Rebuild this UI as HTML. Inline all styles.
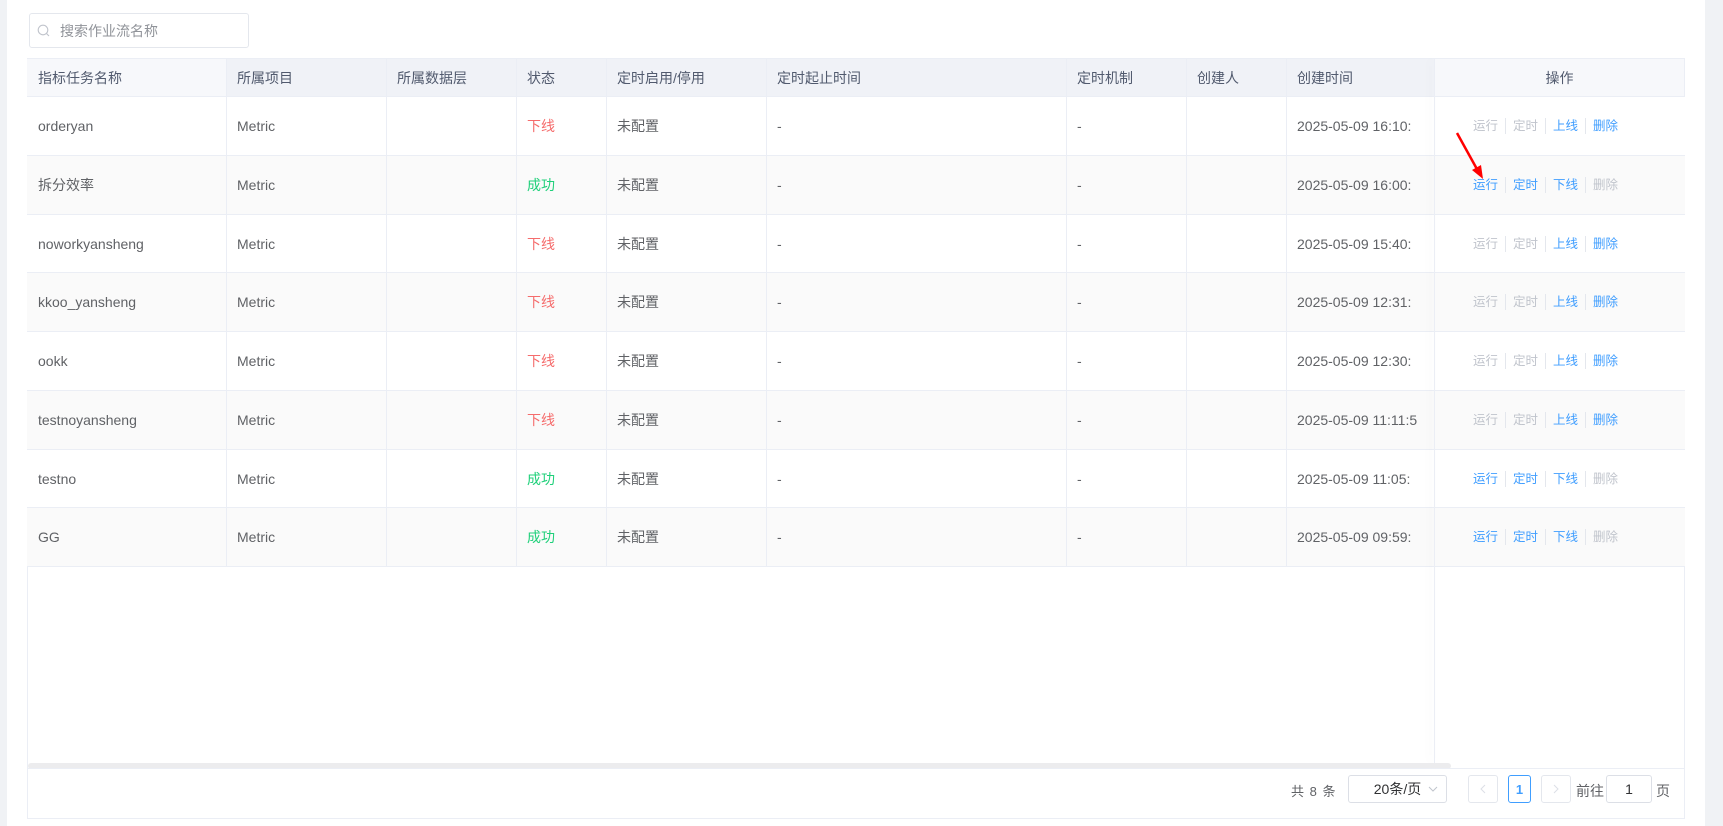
<!DOCTYPE html>
<html><head><meta charset="utf-8"><style>
*{box-sizing:border-box;margin:0;padding:0}
body{width:1723px;height:826px;background:#fff;position:relative;overflow:hidden;font-family:"Liberation Sans","Noto Sans CJK SC",sans-serif;color:#606266;font-size:14px}
.a{position:absolute}
.strip{background:#f0f2f5}
.cell{position:absolute;display:flex;align-items:center;padding-left:10px;white-space:nowrap;overflow:hidden;border-right:1px solid #ebeef5;border-bottom:1px solid #ebeef5}
.hd{color:#515a6e;font-size:14px;background:#f0f2f7}
.red{color:#f56c6c}.grn{color:#1fd07a}
.ops{position:absolute;left:1435px;width:250px;display:flex;align-items:center;justify-content:flex-start;padding-left:31px;font-size:12.5px;border-bottom:1px solid #ebeef5}
.ops span{padding:0 7px;border-left:1px solid #e4e7ed;line-height:16px}
.ops span:first-child{border-left:none}
.b{color:#409eff}.g{color:#c0c4cc}
.box{position:absolute;border:1px solid #dcdfe6;border-radius:3px;background:#fff;display:flex;align-items:center;justify-content:center}
</style></head><body>
<div class="a strip" style="left:0;top:0;width:7px;height:826px"></div>
<div class="a strip" style="left:1705px;top:0;width:18px;height:826px"></div>

<div class="a" style="left:29px;top:13px;width:220px;height:35px;border:1px solid #e4e7ed;border-radius:3px"></div>
<svg class="a" style="left:37px;top:24px" width="13" height="13" viewBox="0 0 13 13"><circle cx="6" cy="6" r="4.8" fill="none" stroke="#c0c4cc" stroke-width="1.1"/><path d="M9.5 9.5L12 12" stroke="#c0c4cc" stroke-width="1.1"/></svg>
<div class="a" style="left:60px;top:21px;font-size:14px;color:#909399">搜索作业流名称</div>

<div class="a" style="left:27px;top:58px;width:1658px;height:761px;border:1px solid #ebeef5"></div>
<div id="t"></div>
<div class="a" style="left:28px;top:763px;width:1423px;height:6px;background:#ececee;border-radius:3px"></div>
<div class="a" style="left:28px;top:768px;width:1656px;height:1px;background:#ebeef5"></div>
<div class="a" style="left:1434px;top:59px;width:1px;height:704px;box-shadow:-4px 0 8px rgba(0,0,0,0.08);background:#ebeef5"></div>
<div class="a" style="left:1435px;top:59px;width:249px;height:38px;background:#f7f8fb;display:flex;align-items:center;justify-content:center;color:#515a6e;border-bottom:1px solid #ebeef5">操作</div>

<div class="a" style="left:1291px;top:781px;font-size:13px;color:#606266;letter-spacing:1px">共 8 条</div>
<div class="box" style="left:1348px;top:775px;width:99px;height:28px;font-size:14px;color:#303133">20条/页<svg style="position:absolute;right:8px;top:10px" width="10" height="7" viewBox="0 0 10 7"><path d="M1 1l4 4 4-4" fill="none" stroke="#c0c4cc"/></svg></div>
<div class="box" style="left:1468px;top:775px;width:30px;height:28px;border-color:#e4e7ed"><svg width="6" height="10"><path d="M5 1L1 5l4 4" fill="none" stroke="#dcdfe6"/></svg></div>
<div class="box" style="left:1508px;top:775px;width:23px;height:28px;border-color:#409eff;color:#409eff;font-weight:bold;font-size:13px">1</div>
<div class="box" style="left:1541px;top:775px;width:30px;height:28px;border-color:#e4e7ed"><svg width="6" height="10"><path d="M1 1l4 4-4 4" fill="none" stroke="#dcdfe6"/></svg></div>
<div class="a" style="left:1576px;top:781px;font-size:14px">前往</div>
<div class="box" style="left:1606px;top:775px;width:46px;height:28px;font-size:14px;color:#303133">1</div>
<div class="a" style="left:1656px;top:781px;font-size:14px">页</div>

<svg class="a" style="left:1450px;top:128px" width="40" height="55" viewBox="0 0 40 55"><path d="M7 5L28 43" stroke="#f00" stroke-width="2.5"/><path d="M33 51L22 42L31 37Z" fill="#f00"/></svg>

<script>
var cols=[27,227,387,517,607,767,1067,1187,1287,1435];
var hds=["指标任务名称","所属项目","所属数据层","状态","定时启用/停用","定时起止时间","定时机制","创建人","创建时间"];
var rows=[["orderyan","下线","16:10:"],["拆分效率","成功","16:00:"],["noworkyansheng","下线","15:40:"],["kkoo_yansheng","下线","12:31:"],["ookk","下线","12:30:"],["testnoyansheng","下线","11:11:5"],["testno","成功","11:05:"],["GG","成功","09:59:"]];
var h="";
function c(i,top,ht,txt,cls,bg){h+='<div class="cell '+(cls||'')+'" style="left:'+cols[i]+'px;top:'+top+'px;width:'+(cols[i+1]-cols[i])+'px;height:'+ht+'px;'+(i==0?'padding-left:11px;':'')+(bg?'background:'+bg:'')+'">'+txt+'</div>';}
for(var i=0;i<9;i++)c(i,59,38,hds[i],'hd',i==0?'#f7f8fb':'');
for(var r=0;r<8;r++){var y=Math.round(97+r*58.75),y2=Math.round(97+(r+1)*58.75),ht=y2-y,bg=r%2?'#fafafa':'#fff',on=rows[r][1]=='成功';
var v=[rows[r][0],"Metric","",'<span class="'+(on?'grn':'red')+'">'+rows[r][1]+'</span>',"未配置","-","-","","2025-05-09 "+rows[r][2]];
for(var i=0;i<9;i++)c(i,y,ht,v[i],'',bg);
h+='<div class="ops" style="top:'+y+'px;height:'+ht+'px;background:'+bg+'">'+(on?'<span class="b">运行</span><span class="b">定时</span><span class="b">下线</span><span class="g">删除</span>':'<span class="g">运行</span><span class="g">定时</span><span class="b">上线</span><span class="b">删除</span>')+'</div>';}
document.getElementById('t').innerHTML=h;
</script>
</body></html>
